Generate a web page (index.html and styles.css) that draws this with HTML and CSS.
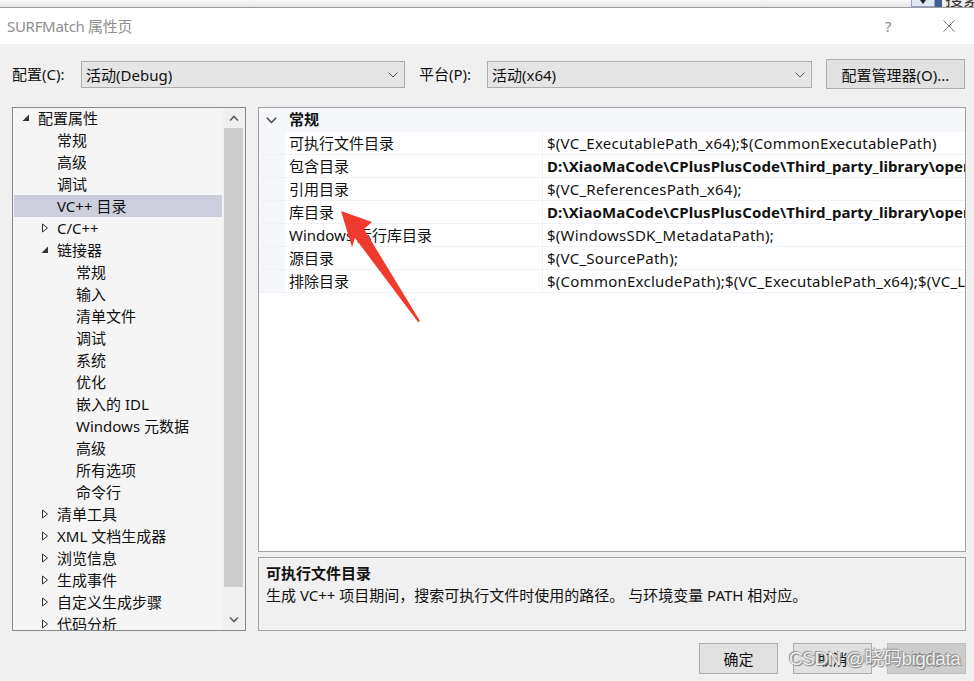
FILE: index.html
```html
<!DOCTYPE html>
<html lang="zh-CN">
<head>
<meta charset="utf-8">
<title>SURFMatch 属性页</title>
<link rel="stylesheet" href="styles.css">
</head>
<body>
<div class="screen">
  <div class="topstrip">
    <div class="bg-app">
      <span class="bg-drop"><svg width="8" height="5" viewBox="0 0 8 5"><polygon points="1,0 7,0 4,4" fill="#222"/></svg></span>
      <span class="bg-bar"></span>
      <span class="bg-search">搜索</span>
    </div>
  </div>

  <div class="dialog">
    <div class="titlebar">
      <span class="title">SURFMatch 属性页</span>
      <span class="tb-help">?</span>
      <span class="tb-close"><svg width="12" height="12" viewBox="0 0 12 12"><path d="M0.5 0.5 L11.5 11.5 M11.5 0.5 L0.5 11.5" stroke="#777" stroke-width="1"/></svg></span>
    </div>

    <div class="body">
      <div class="toolbar">
        <span class="lbl lbl-config">配置(C):</span>
        <div class="select sel-config"><span>活动(Debug)</span><svg class="chev" width="10" height="6" viewBox="0 0 10 6"><path d="M0.5 0.5 L5 5 L9.5 0.5" fill="none" stroke="#555" stroke-width="1"/></svg></div>
        <span class="lbl lbl-plat">平台(P):</span>
        <div class="select sel-plat"><span>活动(x64)</span><svg class="chev" width="10" height="6" viewBox="0 0 10 6"><path d="M0.5 0.5 L5 5 L9.5 0.5" fill="none" stroke="#555" stroke-width="1"/></svg></div>
        <button class="btn btn-mgr">配置管理器(O)...</button>
      </div>

      <div class="panels">
        <div class="tree">
          <div class="tree-list">
            <div class="trow l0"><span class="tog"><svg width="8" height="8" viewBox="0 0 8 8"><polygon points="7,0.5 7,7 0.5,7" fill="#333"/></svg></span>配置属性</div>
            <div class="trow l1"><span class="tog"></span>常规</div>
            <div class="trow l1"><span class="tog"></span>高级</div>
            <div class="trow l1"><span class="tog"></span>调试</div>
            <div class="trow l1 sel"><span class="tog"></span>VC++ 目录</div>
            <div class="trow l1"><span class="tog"><svg width="8" height="10" viewBox="0 0 8 10"><polygon points="1.5,1 6.5,5 1.5,9" fill="none" stroke="#333" stroke-width="1"/></svg></span>C/C++</div>
            <div class="trow l1"><span class="tog"><svg width="8" height="8" viewBox="0 0 8 8"><polygon points="7,0.5 7,7 0.5,7" fill="#333"/></svg></span>链接器</div>
            <div class="trow l2"><span class="tog"></span>常规</div>
            <div class="trow l2"><span class="tog"></span>输入</div>
            <div class="trow l2"><span class="tog"></span>清单文件</div>
            <div class="trow l2"><span class="tog"></span>调试</div>
            <div class="trow l2"><span class="tog"></span>系统</div>
            <div class="trow l2"><span class="tog"></span>优化</div>
            <div class="trow l2"><span class="tog"></span>嵌入的 IDL</div>
            <div class="trow l2"><span class="tog"></span>Windows 元数据</div>
            <div class="trow l2"><span class="tog"></span>高级</div>
            <div class="trow l2"><span class="tog"></span>所有选项</div>
            <div class="trow l2"><span class="tog"></span>命令行</div>
            <div class="trow l1"><span class="tog"><svg width="8" height="10" viewBox="0 0 8 10"><polygon points="1.5,1 6.5,5 1.5,9" fill="none" stroke="#333" stroke-width="1"/></svg></span>清单工具</div>
            <div class="trow l1"><span class="tog"><svg width="8" height="10" viewBox="0 0 8 10"><polygon points="1.5,1 6.5,5 1.5,9" fill="none" stroke="#333" stroke-width="1"/></svg></span>XML 文档生成器</div>
            <div class="trow l1"><span class="tog"><svg width="8" height="10" viewBox="0 0 8 10"><polygon points="1.5,1 6.5,5 1.5,9" fill="none" stroke="#333" stroke-width="1"/></svg></span>浏览信息</div>
            <div class="trow l1"><span class="tog"><svg width="8" height="10" viewBox="0 0 8 10"><polygon points="1.5,1 6.5,5 1.5,9" fill="none" stroke="#333" stroke-width="1"/></svg></span>生成事件</div>
            <div class="trow l1"><span class="tog"><svg width="8" height="10" viewBox="0 0 8 10"><polygon points="1.5,1 6.5,5 1.5,9" fill="none" stroke="#333" stroke-width="1"/></svg></span>自定义生成步骤</div>
            <div class="trow l1"><span class="tog"><svg width="8" height="10" viewBox="0 0 8 10"><polygon points="1.5,1 6.5,5 1.5,9" fill="none" stroke="#333" stroke-width="1"/></svg></span>代码分析</div>
          </div>
          <div class="vscroll">
            <div class="sb-btn"><svg width="10" height="6" viewBox="0 0 10 6"><path d="M1 5.5 L5 1.5 L9 5.5" fill="none" stroke="#606060" stroke-width="1.6"/></svg></div>
            <div class="sb-track"><div class="sb-thumb"></div></div>
            <div class="sb-btn"><svg width="10" height="6" viewBox="0 0 10 6"><path d="M1 0.5 L5 4.5 L9 0.5" fill="none" stroke="#606060" stroke-width="1.6"/></svg></div>
          </div>
        </div>

        <div class="rightcol">
          <div class="grid">
            <div class="grow ghead">
              <span class="gutter"><svg width="11" height="7" viewBox="0 0 11 7"><path d="M0.8 0.8 L5.5 5.5 L10.2 0.8" fill="none" stroke="#444" stroke-width="1.5"/></svg></span>
              <span class="gcat">常规</span>
            </div>
            <div class="grow"><span class="gutter"></span><span class="gname">可执行文件目录</span><span class="gval">$(VC_ExecutablePath_x64);$(CommonExecutablePath)</span></div>
            <div class="grow"><span class="gutter"></span><span class="gname">包含目录</span><span class="gval bold">D:\XiaoMaCode\CPlusPlusCode\Third_party_library\opencv\build\include</span></div>
            <div class="grow"><span class="gutter"></span><span class="gname">引用目录</span><span class="gval">$(VC_ReferencesPath_x64);</span></div>
            <div class="grow"><span class="gutter"></span><span class="gname">库目录</span><span class="gval bold">D:\XiaoMaCode\CPlusPlusCode\Third_party_library\opencv\build\x64\vc15\lib</span></div>
            <div class="grow"><span class="gutter"></span><span class="gname">Windows 运行库目录</span><span class="gval">$(WindowsSDK_MetadataPath);</span></div>
            <div class="grow"><span class="gutter"></span><span class="gname">源目录</span><span class="gval">$(VC_SourcePath);</span></div>
            <div class="grow"><span class="gutter"></span><span class="gname">排除目录</span><span class="gval">$(CommonExcludePath);$(VC_ExecutablePath_x64);$(VC_LibraryPath_x64)</span></div>
          </div>
          <div class="desc">
            <div class="desc-title">可执行文件目录</div>
            <div class="desc-text">生成 VC++ 项目期间，搜索可执行文件时使用的路径。 与环境变量 PATH 相对应。</div>
          </div>
        </div>
      </div>

      <div class="footer">
        <button class="btn fbtn">确定</button>
        <button class="btn fbtn">取消</button>
        <button class="btn fbtn disabled">应用</button>
      </div>
    </div>
  </div>

  <svg class="arrow" width="974" height="681" viewBox="0 0 974 681">
    <polygon points="341,211 372,222 364,229 420,321 418,322 355,238 352,247" fill="#f03a2e"/>
  </svg>
  <div class="watermark">CSDN @晓码bigdata</div>
</div>
</body>
</html>
```

FILE: styles.css
```css
* { box-sizing: border-box; }

html, body {
  margin: 0;
  padding: 0;
}

body {
  width: 974px;
  height: 681px;
  overflow: hidden;
  background: #f0f0f0;
  font-family: "Noto Sans", "Noto Sans CJK SC", sans-serif;
  font-size: 15px;
  color: #111;
}

.screen {
  position: relative;
  width: 974px;
  height: 681px;
  overflow: hidden;
}

/* background application strip */
.topstrip {
  height: 8px;
  background: linear-gradient(#f7f7f7, #e6e6e6);
  border-bottom: 1px solid #9a9a9a;
  display: flex;
  justify-content: flex-end;
  overflow: hidden;
}

.bg-app {
  display: flex;
  align-items: flex-start;
  height: 7px;
}

.bg-drop {
  width: 24px;
  height: 7px;
  background: #dfe7f3;
  border: 1px solid #8ea2c4;
  border-top: none;
  display: flex;
  justify-content: center;
  align-items: flex-start;
}

.bg-bar {
  width: 7px;
  height: 7px;
  background: #3f5d93;
}

.bg-search {
  font-family: "Noto Sans CJK SC", sans-serif;
  font-size: 18px;
  line-height: 18px;
  margin-top: -11px;
  margin-left: 3px;
  width: 29px;
  overflow: hidden;
  white-space: nowrap;
  color: #333;
}

/* dialog */
.dialog {
  display: flex;
  flex-direction: column;
}

.titlebar {
  height: 36px;
  background: #ffffff;
  display: flex;
  align-items: center;
  padding-left: 7px;
}

.title {
  font-family: "Noto Sans", "Noto Sans CJK SC", sans-serif;
  font-size: 15px;
  color: #8f8f8f;
  letter-spacing: -0.3px;
  flex: 1;
  margin-top: -1px;
}

.tb-help {
  font-family: "Noto Sans", sans-serif;
  font-size: 15px;
  color: #8a8a8a;
  width: 20px;
  margin-right: 38px;
}

.tb-close {
  width: 12px;
  height: 12px;
  margin-right: 19px;
  display: flex;
}

.body {
  display: flex;
  flex-direction: column;
  padding: 15px 8px 0 12px;
}

/* toolbar */
.toolbar {
  display: flex;
  align-items: center;
  height: 30px;
}

.lbl {
  line-height: 20px;
}

.lbl-config { width: 69px; }
.lbl-plat { width: 68px; margin-left: 14px; }

.select {
  height: 27px;
  background: #e5e5e5;
  border: 1px solid #adadad;
  display: flex;
  align-items: center;
  justify-content: space-between;
  padding: 0 6px 0 4px;
  margin-top: 1px;
}

.sel-config { width: 324px; }
.sel-plat { width: 325px; }

.btn {
  font-family: "Noto Sans", "Noto Sans CJK SC", sans-serif;
  font-size: 15px;
  color: #111;
  background: #e1e1e1;
  border: 1px solid #adadad;
  padding: 0;
  cursor: default;
}

.btn-mgr {
  width: 139px;
  height: 30px;
  margin-left: 14px;
}

/* panels */
.panels {
  display: flex;
  margin-top: 18px;
  height: 524px;
}

.tree {
  width: 234px;
  height: 524px;
  border: 1px solid #828790;
  background: #f5f5f5;
  display: flex;
  overflow: hidden;
}

.tree-list {
  flex: 1;
  margin-top: -1px;
  overflow: hidden;
}

.trow {
  height: 22px;
  line-height: 22px;
  display: flex;
  align-items: center;
  white-space: nowrap;
  color: #111;
}

.tog {
  width: 19px;
  height: 22px;
  display: flex;
  align-items: center;
  padding-left: 3px;
  flex: none;
}

.l0 { padding-left: 6px; }
.l1 { padding-left: 25px; }
.l2 { padding-left: 44px; }

.trow.sel {
  background: #cccedb;
  margin: 0 1px;
  padding-left: 24px;
}

.l0 .tog svg, .l1 .tog svg { margin-top: -1px; }

.vscroll {
  width: 22px;
  display: flex;
  flex-direction: column;
  background: #f0f0f0;
}

.sb-btn {
  height: 20px;
  display: flex;
  align-items: center;
  justify-content: center;
  flex: none;
}

.sb-track {
  flex: 1;
  padding: 0 2px 0 1px;
}

.sb-thumb {
  height: 459px;
  background: #cdcdcd;
}

.rightcol {
  margin-left: 12px;
  width: 708px;
  display: flex;
  flex-direction: column;
  gap: 5px;
}

.grid {
  height: 445px;
  border: 1px solid #a0a0a0;
  background: #ffffff;
  overflow: hidden;
}

.grow {
  display: flex;
  height: 23px;
  align-items: stretch;
  white-space: nowrap;
  border-bottom: 1px solid #f0f2f7;
}

.ghead {
  height: 24px;
  background: #f5f7fb;
  border-bottom: none;
}

.gutter {
  width: 26px;
  flex: none;
  background: #f5f7fb;
  display: flex;
  align-items: center;
  padding-left: 7px;
}

.gcat {
  font-weight: bold;
  line-height: 23px;
  padding-left: 4px;
}

.gname {
  width: 258px;
  flex: none;
  padding-left: 4px;
  line-height: 22px;
  border-right: 1px solid #f0f2f7;
}

.gval {
  flex: 1;
  padding-left: 4px;
  line-height: 22px;
  overflow: hidden;
  letter-spacing: 0.25px;
}

.bold { font-weight: bold; letter-spacing: 0.1px; }

.desc {
  height: 74px;
  border: 1px solid #a0a0a0;
  background: #f0f0f0;
  padding: 4px 7px;
}

.desc-title {
  font-weight: bold;
  line-height: 22px;
}

.desc-text {
  line-height: 22px;
}

/* footer */
.footer {
  display: flex;
  justify-content: flex-end;
  gap: 15px;
  margin-top: 12px;
}

.fbtn {
  width: 79px;
  height: 31px;
}

.fbtn.disabled {
  background: #cccccc;
  border-color: #bfbfbf;
  color: #8d8d8d;
}

/* overlays */
.arrow {
  position: absolute;
  left: 0;
  top: 0;
  pointer-events: none;
}

.watermark {
  position: absolute;
  left: 789px;
  top: 647px;
  font-family: "Liberation Sans", "Noto Sans CJK SC", sans-serif;
  font-size: 19px;
  line-height: 24px;
  color: rgba(255, 255, 255, 0.9);
  text-shadow: 0 0 1px #777, 1px 1px 1px #888, -1px -1px 1px #999;
  letter-spacing: -0.5px;
  white-space: nowrap;
}
```
